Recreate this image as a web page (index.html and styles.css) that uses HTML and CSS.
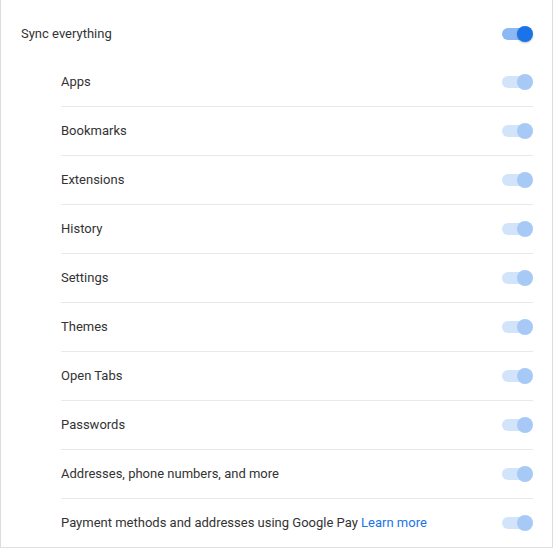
FILE: index.html
```html
<!DOCTYPE html>
<html lang="en">
<head>
  <meta charset="UTF-8" />
  <title>Sync</title>
  <link rel="stylesheet" href="styles.css">
</head>
<body>

  <div class="sync-panel">
    <div class="row">
      <span class="label">Sync everything</span>
      <span class="toggle on"><span class="bar"></span><span class="knob"></span></span>
    </div>

    <div class="sub-list">
      <div class="row sub">
        <span class="label">Apps</span>
        <span class="toggle on disabled"><span class="bar"></span><span class="knob"></span></span>
      </div>
      <div class="row sub">
        <span class="label">Bookmarks</span>
        <span class="toggle on disabled"><span class="bar"></span><span class="knob"></span></span>
      </div>
      <div class="row sub">
        <span class="label">Extensions</span>
        <span class="toggle on disabled"><span class="bar"></span><span class="knob"></span></span>
      </div>
      <div class="row sub">
        <span class="label">History</span>
        <span class="toggle on disabled"><span class="bar"></span><span class="knob"></span></span>
      </div>
      <div class="row sub">
        <span class="label">Settings</span>
        <span class="toggle on disabled"><span class="bar"></span><span class="knob"></span></span>
      </div>
      <div class="row sub">
        <span class="label">Themes</span>
        <span class="toggle on disabled"><span class="bar"></span><span class="knob"></span></span>
      </div>
      <div class="row sub">
        <span class="label">Open Tabs</span>
        <span class="toggle on disabled"><span class="bar"></span><span class="knob"></span></span>
      </div>
      <div class="row sub">
        <span class="label">Passwords</span>
        <span class="toggle on disabled"><span class="bar"></span><span class="knob"></span></span>
      </div>
      <div class="row sub">
        <span class="label">Addresses, phone numbers, and more</span>
        <span class="toggle on disabled"><span class="bar"></span><span class="knob"></span></span>
      </div>
      <div class="row sub">
        <span class="label">Payment methods and addresses using Google Pay <a href="#" class="link">Learn more</a></span>
        <span class="toggle on disabled"><span class="bar"></span><span class="knob"></span></span>
      </div>
    </div>
  </div>

</body>
</html>
```

FILE: styles.css
```css
body {
  margin: 0;
  font-family: Roboto, "Liberation Sans", sans-serif;
  font-size: 13px;
  color: #333;
  background: #fff;
}

.sync-panel {
  width: 551px;
  padding-top: 10px;
  border-left: 1px solid #ddd;
  border-right: 1px solid #ddd;
  border-bottom: 1px solid #e0e0e0;
}

.row {
  display: flex;
  align-items: center;
  justify-content: space-between;
  height: 48px;
  padding: 0 19px 0 20px;
}

.label {
  padding-bottom: 2px;
}

.sub-list {
  padding: 0 19px 0 60px;
}

.sub-list .row {
  padding: 0;
}

.sub + .sub {
  border-top: 1px solid #e8e8e8;
}

.link {
  color: #1a73e8;
  text-decoration: none;
}

.toggle {
  position: relative;
  display: inline-block;
  width: 34px;
  height: 12px;
  flex: none;
}

.toggle .bar {
  position: absolute;
  left: 3px;
  top: 0;
  width: 28px;
  height: 12px;
  border-radius: 8px;
  background: #bdc1c6;
}

.toggle .knob {
  position: absolute;
  left: 0;
  top: -2px;
  width: 16px;
  height: 16px;
  border-radius: 50%;
  background: #fff;
  box-shadow: 0 1px 3px rgba(0, 0, 0, 0.4);
}

.toggle.on .bar {
  background: #1a73e8;
  opacity: 0.5;
}

.toggle.on .knob {
  left: 18px;
  background: #1a73e8;
  box-shadow: 0 1px 2px rgba(0, 0, 0, 0.25);
}

.toggle.disabled {
  opacity: 0.38;
}

.toggle.disabled .knob {
  box-shadow: none;
}
```
